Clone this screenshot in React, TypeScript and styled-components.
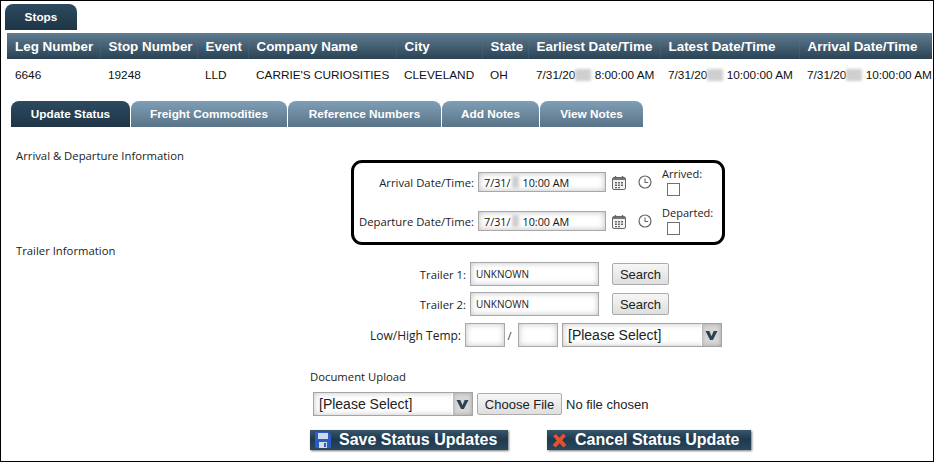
import React from 'react'
import styled, { createGlobalStyle } from 'styled-components'

const GlobalStyle = createGlobalStyle`
  html, body {
    margin: 0;
    background: #fff;
  }
  body {
    font-family: "Liberation Sans", Arial, sans-serif;
    font-size: 12px;
    color: #111;
  }
`

const Frame = styled.div`
  box-sizing: border-box;
  width: 934px;
  height: 462px;
  border: 1px solid #000;
  overflow: hidden;
  padding-top: 3px;
`

const OuterTab = styled.div`
  box-sizing: border-box;
  width: 72px;
  height: 26px;
  margin-left: 4px;
  padding-top: 6px;
  text-align: center;
  border-radius: 8px 8px 0 0;
  background: linear-gradient(#2c4a60, #1f3546);
  color: #fff;
  font-weight: bold;
  font-size: 11.8px;
`

const Table = styled.table`
  border-collapse: collapse;
  table-layout: fixed;
  width: 925px;
  margin: 3px 0 0 6px;
`

const HeadCell = styled.th`
  height: 26px;
  padding: 0 0 0 8px;
  text-align: left;
  font-size: 13.4px;
  font-weight: bold;
  color: #fff;
  white-space: nowrap;
  background: linear-gradient(#5f7c91, #2a4254);
  border-left: 1px solid #56717f55;
  &:first-child {
    border-left: none;
  }
`

const BodyCell = styled.td`
  height: 32px;
  padding: 0 0 0 8px;
  font-size: 11.8px;
  white-space: nowrap;
  overflow: visible;
`

const Blur = styled.span<{ $w: number }>`
  display: inline-block;
  width: ${p => p.$w}px;
  height: 12px;
  vertical-align: -2px;
  background: #cfcfcf;
  filter: blur(1.5px);
`

const SubTabs = styled.div`
  display: flex;
  gap: 1px;
  margin: 10px 0 0 10px;
`

const SubTab = styled.div<{ $active?: boolean; $w: number }>`
  box-sizing: border-box;
  width: ${p => p.$w}px;
  height: 26px;
  padding-top: 6px;
  text-align: center;
  border-radius: 8px 8px 0 0;
  font-size: 11.8px;
  font-weight: bold;
  color: #fff;
  background: ${p => (p.$active ? 'linear-gradient(#2c4a60, #1f3546)' : 'linear-gradient(#7e9fb7, #5a7387)')};
`

const Heading = styled.div`
  font-family: "Open Sans", sans-serif;
  font-size: 11.3px;
  line-height: 14px;
  white-space: nowrap;
  color: #222;
`

const ArrivalSection = styled.div`
  display: flex;
  align-items: flex-start;
  margin: 22px 0 0 15px;
`

const ArrivalHeading = styled(Heading)`
  width: 335px;
`

const DateBox = styled.div`
  box-sizing: border-box;
  width: 374px;
  height: 85px;
  margin-top: 11px;
  padding: 4px 0 0 0;
  border: 3px solid #000;
  border-radius: 11px;
  display: flex;
  flex-direction: column;
  gap: 9px;
`

const DateRow = styled.div`
  display: flex;
  align-items: center;
  height: 30px;
`

const FieldLabel = styled.label<{ $w: number; $size?: number }>`
  width: ${p => p.$w}px;
  flex: none;
  text-align: right;
  font-family: "Open Sans", sans-serif;
  font-size: ${p => p.$size || 11.3}px;
  white-space: nowrap;
  color: #222;
`

const DateField = styled.div`
  box-sizing: border-box;
  width: 128px;
  height: 20px;
  margin-left: 4px;
  padding-left: 5px;
  display: flex;
  align-items: center;
  font-family: "Open Sans", sans-serif;
  font-size: 10.8px;
  white-space: nowrap;
  border: 1px solid #a8a8a8;
  background: #fff;
  box-shadow: inset 0 0 6px #bbb;
`

const DateBlur = styled(Blur)`
  margin: 0 3px 0 2px;
  flex: none;
`

const CalendarWrap = styled.span`
  display: flex;
  margin-left: 6px;
`

const ClockWrap = styled.span`
  display: flex;
  margin-left: 12px;
`

const CheckColumn = styled.div`
  margin-left: 10px;
  display: flex;
  flex-direction: column;
  height: 30px;
`

const CheckLabel = styled.span`
  font-family: "Open Sans", sans-serif;
  font-size: 11px;
  line-height: 13px;
  color: #222;
`

const CheckBox = styled.input`
  appearance: none;
  box-sizing: border-box;
  width: 13px;
  height: 13px;
  margin: 3px 0 0 5px;
  border: 1px solid #707070;
  background: #fff;
`

const TrailerHeading = styled(Heading)`
  margin: -1px 0 0 15px;
`

const FormRow = styled.div<{ $top: number; $indent: number }>`
  display: flex;
  align-items: center;
  height: 24px;
  margin: ${p => p.$top}px 0 0 ${p => p.$indent}px;
`

const TextField = styled.input`
  box-sizing: border-box;
  width: 129px;
  height: 24px;
  margin: 0 0 0 4px;
  padding: 0 0 0 5px;
  font-family: "Open Sans", sans-serif;
  font-size: 10px;
  color: #222;
  border: 1px solid #a8a8a8;
  outline: none;
  box-shadow: inset 0 0 6px #c4c4c4;
`

const SmallField = styled(TextField)`
  width: 40px;
`

const Slash = styled.span`
  width: 9px;
  text-align: center;
  font-family: "Open Sans", sans-serif;
  font-size: 11px;
  color: #333;
`

const GrayButton = styled.button<{ $w: number; $gap: number }>`
  box-sizing: border-box;
  width: ${p => p.$w}px;
  height: 22px;
  margin: 0 0 0 ${p => p.$gap}px;
  padding: 0;
  font-family: "Liberation Sans", Arial, sans-serif;
  font-size: 13px;
  color: #222;
  border: 1px solid #acacac;
  border-radius: 2px;
  background: linear-gradient(#f6f6f6, #dedede);
`

const SelectBox = styled.div<{ $gap: number }>`
  box-sizing: border-box;
  width: 160px;
  height: 24px;
  margin-left: ${p => p.$gap}px;
  display: flex;
  border: 1px solid #a4a4a4;
  background: #fff;
  box-shadow: inset 0 0 6px #c4c4c4;
`

const SelectText = styled.div`
  flex: 1;
  padding-left: 5px;
  font-size: 14px;
  line-height: 22px;
  color: #222;
`

const SelectArrow = styled.div`
  width: 19px;
  display: flex;
  align-items: center;
  justify-content: center;
  background: #d6d6d6;
  box-shadow: inset 0 0 4px #a0a0a0;
  border-left: 1px solid #fff;
`

const UploadHeading = styled(Heading)`
  margin: 23px 0 0 309px;
`

const FileNote = styled.span`
  margin-left: 4px;
  font-size: 13px;
  color: #222;
`

const ActionRow = styled.div`
  display: flex;
  margin: 14px 0 0 309px;
`

const ActionButton = styled.button<{ $w: number; $gap?: number }>`
  box-sizing: border-box;
  display: flex;
  align-items: center;
  width: ${p => p.$w}px;
  height: 20px;
  margin: 0 0 0 ${p => p.$gap || 0}px;
  padding: 0 0 0 5px;
  gap: 8px;
  border: none;
  font-family: "Liberation Sans", Arial, sans-serif;
  font-size: 16px;
  font-weight: bold;
  color: #fff;
  white-space: nowrap;
  background: linear-gradient(#3a566b, #1e3a50 45%, #2b475c);
  box-shadow: 1px 1px 2px #777;
`

const CalendarIcon = () => (
  <svg width="14" height="15" viewBox="0 0 14 15">
    <rect x="0.5" y="2.5" width="13" height="12" rx="1.5" fill="#f2f2f2" stroke="#666" />
    <rect x="1" y="3" width="12" height="2" fill="#777" />
    <path d="M3.5 1v3M10.5 1v3" stroke="#666" strokeWidth="1.4" />
    <path d="M3 7h2v1.5H3zM6 7h2v1.5H6zM9 7h2v1.5H9zM3 9.5h2V11H3zM6 9.5h2V11H6zM9 9.5h2V11H9zM3 12h2v1.2H3zM6 12h2v1.2H6z" fill="#666" />
  </svg>
)

const ClockIcon = () => (
  <svg width="14" height="14" viewBox="0 0 14 14" fill="none">
    <circle cx="7" cy="7" r="6" stroke="#666" strokeWidth="1.2" />
    <path d="M7 3.5V7.5H10.2" stroke="#666" strokeWidth="1.1" />
  </svg>
)

const ChevronIcon = () => (
  <svg width="13" height="11" viewBox="0 0 13 11">
    <path d="M0.5 1h3.8l2.2 5.2L8.7 1h3.8L7.9 10H5.1z" fill="#2c4255" />
  </svg>
)

const SaveIcon = () => (
  <svg width="16" height="16" viewBox="0 0 16 16">
    <path d="M0 1a1 1 0 0 1 1-1h12l3 3v12a1 1 0 0 1-1 1H1a1 1 0 0 1-1-1z" fill="#2a5cc4" />
    <rect x="3" y="1" width="10" height="6" fill="#cfd9ee" />
    <rect x="4" y="10" width="8" height="6" fill="#d5dbe6" />
    <rect x="9" y="11" width="2" height="4" fill="#2a5cc4" />
  </svg>
)

const CancelIcon = () => (
  <svg width="15" height="15" viewBox="0 0 15 15">
    <path d="M1 3l3-2 3.5 3.5L11 .8l3 2.2-3.7 4.3L14.4 12l-3 2.4-3.7-4.2L3.6 14.6.6 12l4.2-4.6z" fill="#e8502a" />
  </svg>
)

const columns = [
  { title: 'Leg Number', width: 93, value: '6646' },
  { title: 'Stop Number', width: 97, value: '19248' },
  { title: 'Event', width: 51, value: 'LLD' },
  { title: 'Company Name', width: 148, value: "CARRIE'S CURIOSITIES" },
  { title: 'City', width: 86, value: 'CLEVELAND' },
  { title: 'State', width: 46, value: 'OH' },
  { title: 'Earliest Date/Time', width: 132, value: ['7/31/20', '8:00:00 AM'] },
  { title: 'Latest Date/Time', width: 139, value: ['7/31/20', '10:00:00 AM'] },
  { title: 'Arrival Date/Time', width: 133, value: ['7/31/20', '10:00:00 AM'] },
]

const tabs = [
  { label: 'Update Status', width: 119, active: true },
  { label: 'Freight Commodities', width: 156 },
  { label: 'Reference Numbers', width: 153 },
  { label: 'Add Notes', width: 97 },
  { label: 'View Notes', width: 103 },
]

const App = () => {
  return (
    <Frame>
      <GlobalStyle />
      <OuterTab>Stops</OuterTab>
      <Table>
        <colgroup>
          {columns.map(c => (
            <col key={c.title} width={c.width} />
          ))}
        </colgroup>
        <thead>
          <tr>
            {columns.map(c => (
              <HeadCell key={c.title}>{c.title}</HeadCell>
            ))}
          </tr>
        </thead>
        <tbody>
          <tr>
            {columns.map(c => (
              <BodyCell key={c.title}>
                {Array.isArray(c.value) ? (
                  <>
                    {c.value[0]}
                    <Blur $w={16} />
                    {' '}
                    {c.value[1]}
                  </>
                ) : (
                  c.value
                )}
              </BodyCell>
            ))}
          </tr>
        </tbody>
      </Table>

      <SubTabs>
        {tabs.map(t => (
          <SubTab key={t.label} $w={t.width} $active={t.active}>
            {t.label}
          </SubTab>
        ))}
      </SubTabs>

      <ArrivalSection>
        <ArrivalHeading>Arrival &amp; Departure Information</ArrivalHeading>
        <DateBox>
          <DateRow>
            <FieldLabel $w={120}>Arrival Date/Time:</FieldLabel>
            <DateField>
              7/31/
              <DateBlur $w={7} />
              10:00 AM
            </DateField>
            <CalendarWrap>
              <CalendarIcon />
            </CalendarWrap>
            <ClockWrap>
              <ClockIcon />
            </ClockWrap>
            <CheckColumn>
              <CheckLabel>Arrived:</CheckLabel>
              <CheckBox type="checkbox" />
            </CheckColumn>
          </DateRow>
          <DateRow>
            <FieldLabel $w={120}>Departure Date/Time:</FieldLabel>
            <DateField>
              7/31/
              <DateBlur $w={7} />
              10:00 AM
            </DateField>
            <CalendarWrap>
              <CalendarIcon />
            </CalendarWrap>
            <ClockWrap>
              <ClockIcon />
            </ClockWrap>
            <CheckColumn>
              <CheckLabel>Departed:</CheckLabel>
              <CheckBox type="checkbox" />
            </CheckColumn>
          </DateRow>
        </DateBox>
      </ArrivalSection>

      <TrailerHeading>Trailer Information</TrailerHeading>

      <FormRow $top={4} $indent={360}>
        <FieldLabel $w={105}>Trailer 1:</FieldLabel>
        <TextField defaultValue="UNKNOWN" />
        <GrayButton $w={57} $gap={13}>Search</GrayButton>
      </FormRow>
      <FormRow $top={6} $indent={360}>
        <FieldLabel $w={105}>Trailer 2:</FieldLabel>
        <TextField defaultValue="UNKNOWN" />
        <GrayButton $w={57} $gap={13}>Search</GrayButton>
      </FormRow>
      <FormRow $top={7} $indent={360}>
        <FieldLabel $w={100} $size={12}>Low/High Temp:</FieldLabel>
        <SmallField />
        <Slash>/</Slash>
        <SmallField />
        <SelectBox $gap={4}>
          <SelectText>[Please Select]</SelectText>
          <SelectArrow>
            <ChevronIcon />
          </SelectArrow>
        </SelectBox>
      </FormRow>

      <UploadHeading>Document Upload</UploadHeading>
      <FormRow $top={8} $indent={312}>
        <SelectBox $gap={0}>
          <SelectText>[Please Select]</SelectText>
          <SelectArrow>
            <ChevronIcon />
          </SelectArrow>
        </SelectBox>
        <GrayButton $w={85} $gap={4}>Choose File</GrayButton>
        <FileNote>No file chosen</FileNote>
      </FormRow>

      <ActionRow>
        <ActionButton $w={198}>
          <SaveIcon />
          Save Status Updates
        </ActionButton>
        <ActionButton $w={204} $gap={39}>
          <CancelIcon />
          Cancel Status Update
        </ActionButton>
      </ActionRow>
    </Frame>
  )
}

export default App
